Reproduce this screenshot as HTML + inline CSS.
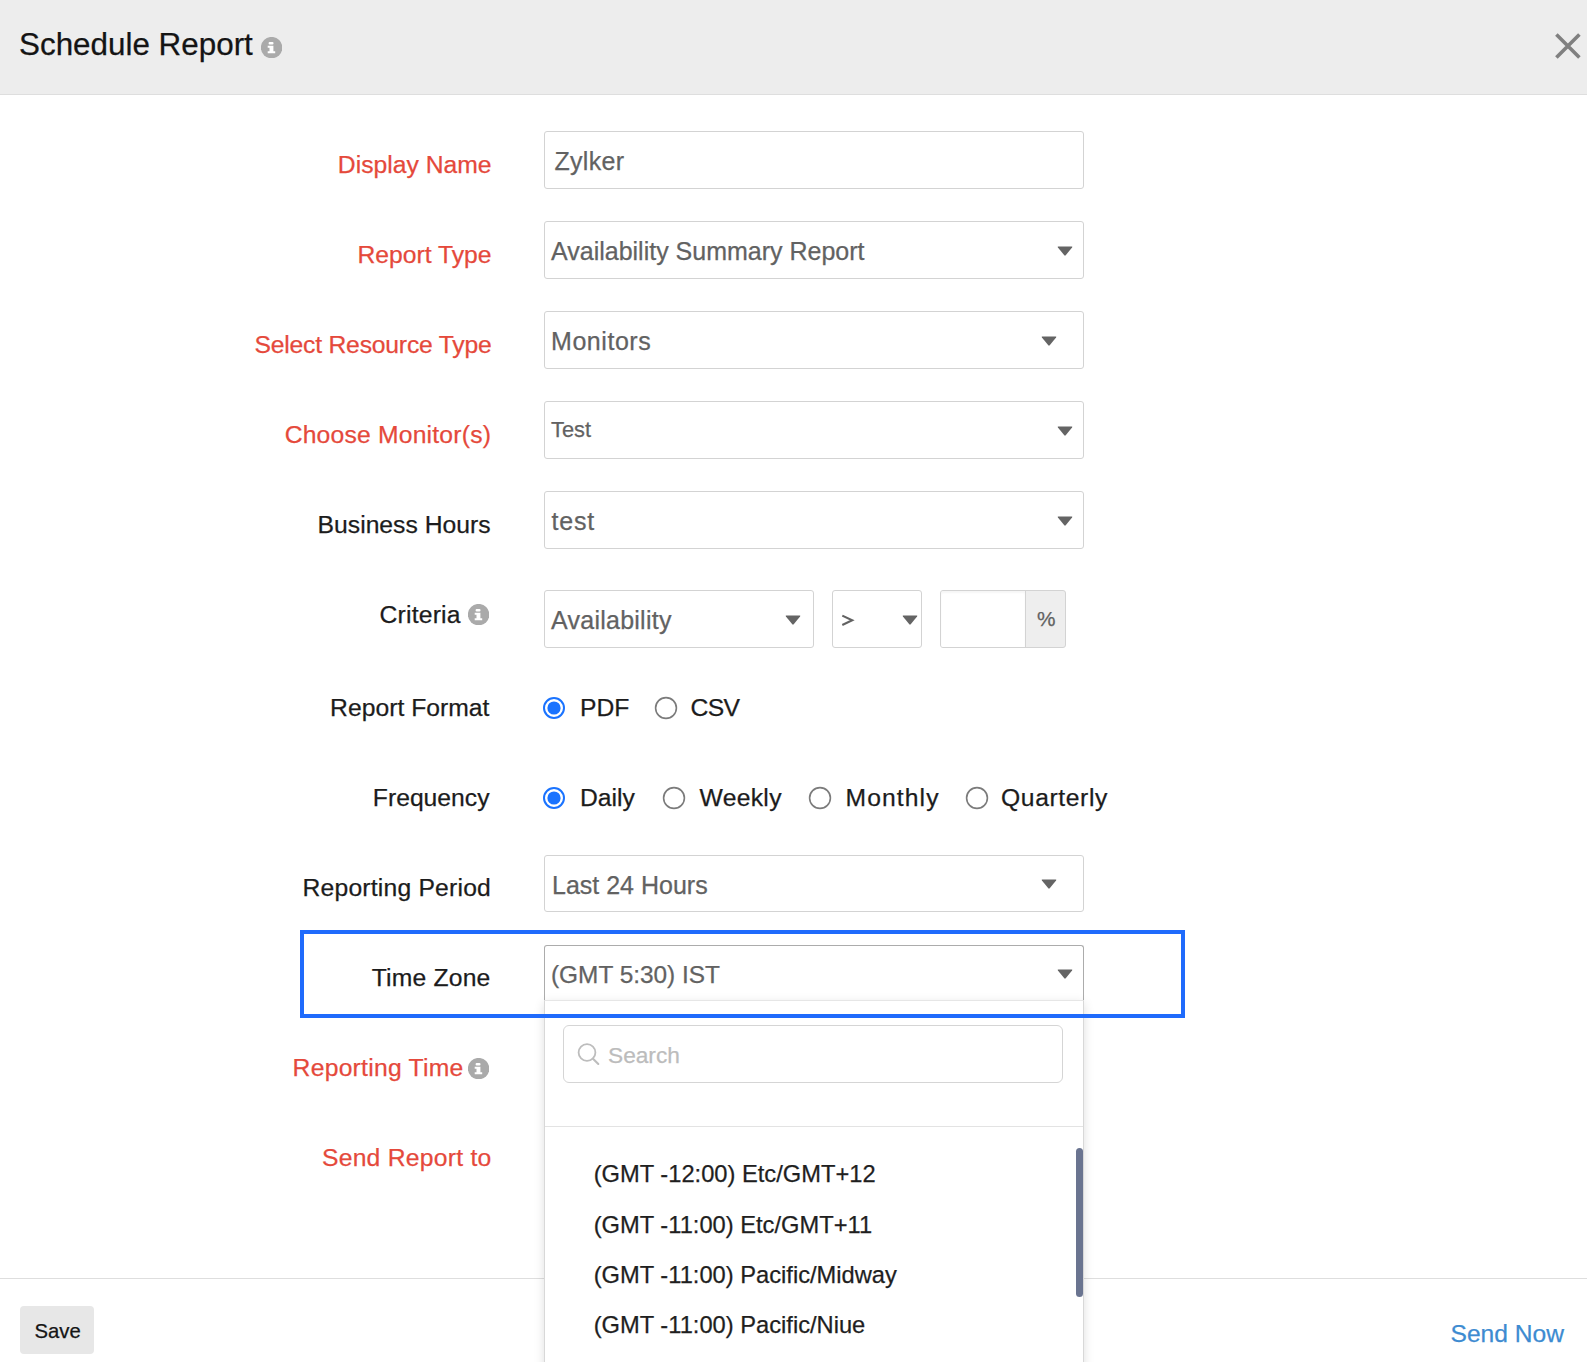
<!DOCTYPE html>
<html>
<head>
<meta charset="utf-8">
<title>Schedule Report</title>
<style>
html,body{margin:0;padding:0;}
body{width:1587px;height:1362px;position:relative;overflow:hidden;background:#fff;font-family:"Liberation Sans",sans-serif;}
.abs{position:absolute;}
.t{position:absolute;white-space:nowrap;line-height:40px;-webkit-text-stroke:0.25px currentColor;}
.box{position:absolute;box-sizing:border-box;border:1px solid #d3d3d3;border-radius:3px;background:#fff;}
</style>
</head>
<body>
<div class="abs" style="left:0;top:0;width:1587px;height:94px;background:#ededed;border-bottom:1px solid #dedede;"></div>
<div class="t" style="left:19.00px;top:24.62px;font-size:31.4px;color:#141414;">Schedule Report</div>
<svg class="abs" style="left:261.3px;top:36.5px" width="21" height="21" viewBox="0 0 21 21"><circle cx="10.6" cy="10.6" r="10.7" fill="#aaaaaa"/><rect x="7.6" y="4.9" width="4.9" height="2.5" rx="1" fill="#fff"/><path d="M6.7 8.7H12.4V14.2H14.2V16.3H6.7V14.2H8.5V10.8H6.7Z" fill="#fff"/></svg>
<svg class="abs" style="left:1550px;top:27.6px" width="36" height="36" viewBox="0 0 36 36"><path d="M6.4 6.6L29.4 29.6M29.4 6.6L6.4 29.6" stroke="#808080" stroke-width="3.6" stroke-linecap="butt"/></svg>
<div class="t" style="right:1095.50px;text-align:right;top:145.44px;font-size:24.7px;color:#e5493b;">Display Name</div>
<div class="t" style="right:1095.50px;text-align:right;top:235.44px;font-size:24.7px;color:#e5493b;">Report Type</div>
<div class="t" style="right:1095.50px;text-align:right;top:324.94px;font-size:24.7px;color:#e5493b;letter-spacing:-0.2px;">Select Resource Type</div>
<div class="t" style="right:1095.90px;text-align:right;top:414.94px;font-size:24.7px;color:#e5493b;letter-spacing:0.2px;">Choose Monitor(s)</div>
<div class="t" style="right:1096.50px;text-align:right;top:504.94px;font-size:24.7px;color:#1c1c1c;">Business Hours</div>
<div class="t" style="right:1126.30px;text-align:right;top:594.84px;font-size:24.7px;color:#1c1c1c;letter-spacing:0.2px;">Criteria</div>
<div class="t" style="right:1097.50px;text-align:right;top:687.74px;font-size:24.7px;color:#1c1c1c;letter-spacing:0.02px;">Report Format</div>
<div class="t" style="right:1097.50px;text-align:right;top:777.94px;font-size:24.7px;color:#1c1c1c;">Frequency</div>
<div class="t" style="right:1096.00px;text-align:right;top:868.14px;font-size:24.7px;color:#1c1c1c;letter-spacing:0.2px;">Reporting Period</div>
<div class="t" style="right:1096.50px;text-align:right;top:957.94px;font-size:24.7px;color:#1c1c1c;letter-spacing:0.2px;">Time Zone</div>
<div class="t" style="right:1123.50px;text-align:right;top:1048.14px;font-size:24.7px;color:#e5493b;letter-spacing:0.25px;">Reporting Time</div>
<div class="t" style="right:1095.50px;text-align:right;top:1137.84px;font-size:24.7px;color:#e5493b;letter-spacing:0.25px;">Send Report to</div>
<svg class="abs" style="left:468.2px;top:603.5px" width="21" height="21" viewBox="0 0 21 21"><circle cx="10.6" cy="10.6" r="10.7" fill="#aaaaaa"/><rect x="7.6" y="4.9" width="4.9" height="2.5" rx="1" fill="#fff"/><path d="M6.7 8.7H12.4V14.2H14.2V16.3H6.7V14.2H8.5V10.8H6.7Z" fill="#fff"/></svg>
<svg class="abs" style="left:468.2px;top:1057.5px" width="21" height="21" viewBox="0 0 21 21"><circle cx="10.6" cy="10.6" r="10.7" fill="#aaaaaa"/><rect x="7.6" y="4.9" width="4.9" height="2.5" rx="1" fill="#fff"/><path d="M6.7 8.7H12.4V14.2H14.2V16.3H6.7V14.2H8.5V10.8H6.7Z" fill="#fff"/></svg>
<div class="box" style="left:543.5px;top:130.5px;width:540px;height:58px;"></div>
<div class="t" style="left:554.50px;top:141.04px;font-size:25px;color:#626262;letter-spacing:0.3px;">Zylker</div>
<div class="box" style="left:543.5px;top:220.5px;width:540px;height:58px;"></div>
<div class="t" style="left:551.00px;top:230.64px;font-size:25px;color:#626262;">Availability Summary Report</div>
<svg class="abs" style="left:1056.50px;top:245.70px" width="16" height="11" viewBox="0 0 16 11"><path d="M1.3 0.5H14.7Q15.8 0.5 15.1 1.5L8.7 9.3Q8 10.1 7.3 9.3L0.9 1.5Q0.2 0.5 1.3 0.5Z" fill="#646464"/></svg>
<div class="box" style="left:543.5px;top:310.5px;width:540px;height:58px;"></div>
<div class="t" style="left:551.00px;top:320.54px;font-size:25px;color:#626262;letter-spacing:0.55px;">Monitors</div>
<svg class="abs" style="left:1040.60px;top:335.70px" width="16" height="11" viewBox="0 0 16 11"><path d="M1.3 0.5H14.7Q15.8 0.5 15.1 1.5L8.7 9.3Q8 10.1 7.3 9.3L0.9 1.5Q0.2 0.5 1.3 0.5Z" fill="#646464"/></svg>
<div class="box" style="left:543.5px;top:400.5px;width:540px;height:58px;"></div>
<div class="t" style="left:551.00px;top:410.35px;font-size:21.8px;color:#626262;">Test</div>
<svg class="abs" style="left:1056.50px;top:425.70px" width="16" height="11" viewBox="0 0 16 11"><path d="M1.3 0.5H14.7Q15.8 0.5 15.1 1.5L8.7 9.3Q8 10.1 7.3 9.3L0.9 1.5Q0.2 0.5 1.3 0.5Z" fill="#646464"/></svg>
<div class="box" style="left:543.5px;top:490.5px;width:540px;height:58px;"></div>
<div class="t" style="left:551.50px;top:501.24px;font-size:25px;color:#626262;letter-spacing:0.8px;">test</div>
<svg class="abs" style="left:1056.50px;top:515.70px" width="16" height="11" viewBox="0 0 16 11"><path d="M1.3 0.5H14.7Q15.8 0.5 15.1 1.5L8.7 9.3Q8 10.1 7.3 9.3L0.9 1.5Q0.2 0.5 1.3 0.5Z" fill="#646464"/></svg>
<div class="box" style="left:543.5px;top:589.8px;width:270px;height:58px;"></div>
<div class="t" style="left:551.00px;top:600.14px;font-size:25px;color:#626262;letter-spacing:0.25px;">Availability</div>
<svg class="abs" style="left:784.70px;top:615.00px" width="16" height="11" viewBox="0 0 16 11"><path d="M1.3 0.5H14.7Q15.8 0.5 15.1 1.5L8.7 9.3Q8 10.1 7.3 9.3L0.9 1.5Q0.2 0.5 1.3 0.5Z" fill="#646464"/></svg>
<div class="box" style="left:831.5px;top:589.8px;width:90px;height:58px;"></div>
<svg class="abs" style="left:838px;top:612px" width="18" height="17" viewBox="0 0 18 17"><path d="M4.3 3.6L14.2 8.3L4.3 13" fill="none" stroke="#626262" stroke-width="2.1" stroke-linejoin="miter"/></svg>
<svg class="abs" style="left:901.70px;top:615.00px" width="16" height="11" viewBox="0 0 16 11"><path d="M1.3 0.5H14.7Q15.8 0.5 15.1 1.5L8.7 9.3Q8 10.1 7.3 9.3L0.9 1.5Q0.2 0.5 1.3 0.5Z" fill="#646464"/></svg>
<div class="box" style="left:939.5px;top:589.8px;width:126px;height:58px;background:#eeeeee;"></div>
<div class="abs" style="left:940.5px;top:590.8px;width:84px;height:56px;background:#fff;border-right:1px solid #d3d3d3;border-radius:2px 0 0 2px;box-shadow:inset 0 2px 2px rgba(0,0,0,0.04);"></div>
<div class="t" style="left:1037.00px;top:599.09px;font-size:20.8px;color:#626262;">%</div>
<svg class="abs" style="left:542.30px;top:695.50px" width="24" height="24" viewBox="0 0 24 24"><circle cx="12" cy="12" r="10" fill="#fff" stroke="#1a73ff" stroke-width="2"/><circle cx="12" cy="12" r="6.6" fill="#1a73ff"/></svg>
<div class="t" style="left:580.00px;top:688.14px;font-size:24.7px;color:#1c1c1c;">PDF</div>
<svg class="abs" style="left:654.30px;top:695.50px" width="24" height="24" viewBox="0 0 24 24"><circle cx="12" cy="12" r="10.4" fill="#fff" stroke="#7b7b7b" stroke-width="1.6"/></svg>
<div class="t" style="left:690.50px;top:688.14px;font-size:24.7px;color:#1c1c1c;letter-spacing:-0.6px;">CSV</div>
<svg class="abs" style="left:542.30px;top:785.70px" width="24" height="24" viewBox="0 0 24 24"><circle cx="12" cy="12" r="10" fill="#fff" stroke="#1a73ff" stroke-width="2"/><circle cx="12" cy="12" r="6.6" fill="#1a73ff"/></svg>
<div class="t" style="left:580.00px;top:778.04px;font-size:24.7px;color:#1c1c1c;">Daily</div>
<svg class="abs" style="left:662.30px;top:785.70px" width="24" height="24" viewBox="0 0 24 24"><circle cx="12" cy="12" r="10.4" fill="#fff" stroke="#7b7b7b" stroke-width="1.6"/></svg>
<div class="t" style="left:699.50px;top:778.04px;font-size:24.7px;color:#1c1c1c;letter-spacing:0.3px;">Weekly</div>
<svg class="abs" style="left:808.20px;top:785.70px" width="24" height="24" viewBox="0 0 24 24"><circle cx="12" cy="12" r="10.4" fill="#fff" stroke="#7b7b7b" stroke-width="1.6"/></svg>
<div class="t" style="left:845.50px;top:778.04px;font-size:24.7px;color:#1c1c1c;letter-spacing:1.1px;">Monthly</div>
<svg class="abs" style="left:964.50px;top:785.70px" width="24" height="24" viewBox="0 0 24 24"><circle cx="12" cy="12" r="10.4" fill="#fff" stroke="#7b7b7b" stroke-width="1.6"/></svg>
<div class="t" style="left:1001.00px;top:778.04px;font-size:24.7px;color:#1c1c1c;letter-spacing:0.6px;">Quarterly</div>
<div class="box" style="left:543.5px;top:854.8px;width:540px;height:57px;"></div>
<div class="t" style="left:552.00px;top:865.14px;font-size:25px;color:#626262;">Last 24 Hours</div>
<svg class="abs" style="left:1040.70px;top:879.20px" width="16" height="11" viewBox="0 0 16 11"><path d="M1.3 0.5H14.7Q15.8 0.5 15.1 1.5L8.7 9.3Q8 10.1 7.3 9.3L0.9 1.5Q0.2 0.5 1.3 0.5Z" fill="#646464"/></svg>
<div class="abs" style="left:0;top:1278px;width:1587px;height:1px;background:#dedede;"></div>
<div class="abs" style="left:20px;top:1306px;width:74px;height:48px;border-radius:4px;background:#e7e7e7;"></div>
<div class="t" style="left:34.50px;top:1310.57px;font-size:20.3px;color:#151515;">Save</div>
<div class="t" style="left:1450.50px;top:1314.08px;font-size:24.6px;color:#3d8bd1;">Send Now</div>
<div class="abs" style="left:543.5px;top:945px;width:540px;height:56px;box-sizing:border-box;border:1px solid #acacac;border-bottom:none;border-radius:3px 3px 0 0;background:#fff;"></div>
<div class="t" style="left:551.00px;top:955.35px;font-size:24.4px;color:#626262;">(GMT 5:30) IST</div>
<svg class="abs" style="left:1056.60px;top:969.00px" width="16" height="11" viewBox="0 0 16 11"><path d="M1.3 0.5H14.7Q15.8 0.5 15.1 1.5L8.7 9.3Q8 10.1 7.3 9.3L0.9 1.5Q0.2 0.5 1.3 0.5Z" fill="#646464"/></svg>
<div class="abs" style="left:543.5px;top:999.8px;width:540px;height:420px;box-sizing:border-box;border:1px solid #d8d8d8;border-top:1px solid #e6e6e6;background:#fff;box-shadow:0 3px 10px rgba(0,0,0,0.13);"></div>
<div class="abs" style="left:562.8px;top:1024.8px;width:500px;height:58px;box-sizing:border-box;border:1px solid #d5d5d5;border-radius:6px;"></div>
<svg class="abs" style="left:574px;top:1040px" width="30" height="30" viewBox="0 0 30 30"><circle cx="13" cy="12.5" r="8.4" fill="none" stroke="#bdbdbd" stroke-width="1.8"/><path d="M19 18.7L24.3 24" stroke="#bdbdbd" stroke-width="2.1" stroke-linecap="round"/></svg>
<div class="t" style="left:608.00px;top:1034.83px;font-size:22.7px;color:#bcbcbc;">Search</div>
<div class="abs" style="left:544.5px;top:1126px;width:538px;height:1px;background:#e3e3e3;"></div>
<div class="t" style="left:593.70px;top:1153.99px;font-size:23.7px;color:#1f1f1f;">(GMT -12:00) Etc/GMT+12</div>
<div class="t" style="left:593.70px;top:1204.59px;font-size:23.7px;color:#1f1f1f;">(GMT -11:00) Etc/GMT+11</div>
<div class="t" style="left:593.70px;top:1254.99px;font-size:23.7px;color:#1f1f1f;">(GMT -11:00) Pacific/Midway</div>
<div class="t" style="left:593.70px;top:1304.59px;font-size:23.7px;color:#1f1f1f;">(GMT -11:00) Pacific/Niue</div>
<div class="abs" style="left:1075.5px;top:1147.8px;width:7.2px;height:149.5px;border-radius:3.5px;background:#6a7490;"></div>
<div class="abs" style="left:300px;top:930px;width:885px;height:88px;box-sizing:border-box;border:4px solid #1f6bfc;"></div>
</body>
</html>
